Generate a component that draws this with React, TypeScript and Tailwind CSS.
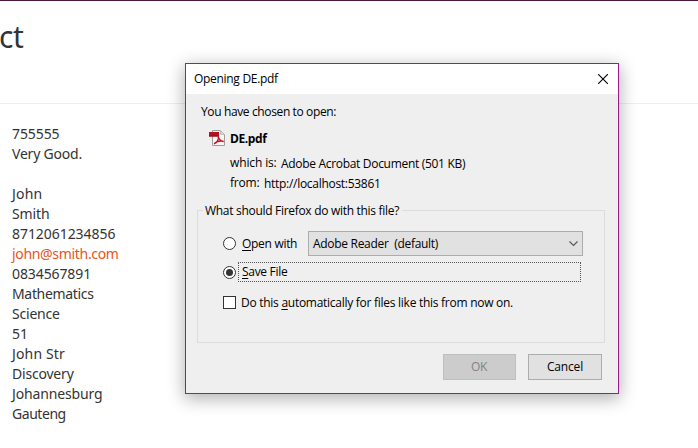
import type { ReactNode } from "react";

const details: { text: string; cls: string }[] = [
  { text: "755555", cls: "tracking-[-0.1px]" },
  { text: "Very Good.", cls: "tracking-[-0.2px]" },
  { text: "", cls: "" },
  { text: "John", cls: "tracking-[0.2px]" },
  { text: "Smith", cls: "tracking-[-0.1px]" },
  { text: "8712061234856", cls: "tracking-[-0.06px]" },
  { text: "john@smith.com", cls: "tracking-[-0.32px] text-[#e95420]" },
  { text: "0834567891", cls: "tracking-[-0.1px]" },
  { text: "Mathematics", cls: "tracking-[-0.33px]" },
  { text: "Science", cls: "tracking-[-0.2px]" },
  { text: "51", cls: "tracking-[-0.1px]" },
  { text: "John Str", cls: "tracking-[0.15px]" },
  { text: "Discovery", cls: "tracking-[-0.2px]" },
  { text: "Johannesburg", cls: "tracking-[-0.15px]" },
  { text: "Gauteng", cls: "tracking-[-0.45px]" },
];

function PdfIcon() {
  return (
    <svg width="16" height="16" viewBox="0 0 16 16" className="shrink-0">
      <path d="M3.5.5h8l4 4v11h-12z" fill="#f8f6f6" stroke="#a39c9c" />
      <path d="M11.5.5v4h4z" fill="#dcd8d8" stroke="#b9b4b4" strokeWidth="0.8" />
      <path d="M0 2h10v4.5H0z" fill="#b5121f" />
      <path d="M0 5.5h10v1H0z" fill="#8e0d18" />
      <path
        d="M9.3 6.5c.4 2.3 1.5 4.1 4.7 5M9.3 6.5c.3 2.8-1.3 5.8-3.9 7.3M5.6 13.2c1.800-1.700 4.500-2.500 8.600-2.100"
        fill="none"
        stroke="#c4121f"
        strokeWidth="1.3"
        strokeLinecap="round"
      />
    </svg>
  );
}

function Radio({ checked = false }: { checked?: boolean }) {
  return (
    <span className="flex size-[13px] shrink-0 items-center justify-center rounded-full border border-[#333] bg-white">
      {checked && <span className="size-[7px] rounded-full bg-[#333]" />}
    </span>
  );
}

function Key({ children }: { children: ReactNode }) {
  return <span className="underline decoration-1 underline-offset-2">{children}</span>;
}

function OpeningDialog() {
  return (
    <div className="absolute top-[63px] left-[185px] flex h-[331px] w-[434px] flex-col border border-[#9b1b8f] bg-[#efefef] font-['Open_Sans','Noto_Sans',sans-serif] text-[12px] leading-4 tracking-[-0.3px] text-black shadow-[0_4px_16px_1px_rgba(0,0,0,0.3)]">
      <div className="flex h-[30px] shrink-0 items-center justify-between bg-white pr-[10px] pl-2">
        <span>Opening DE.pdf</span>
        <svg width="10" height="10" viewBox="0 0 10 10" stroke="#000" strokeWidth="1.1">
          <path d="M0 0l10 10M10 0L0 10" />
        </svg>
      </div>

      <div className="flex flex-col pt-[10px] pl-[14px]">
        <p className="pl-px tracking-[-0.37px]">You have chosen to open:</p>
        <div className="mt-[10px] flex h-4 items-center gap-[5px] pl-[9px]">
          <PdfIcon />
          <span className="pt-px font-bold tracking-[-0.4px]">DE.pdf</span>
        </div>
        <div className="mt-[9px] flex h-4 gap-[5px] pl-[30px] whitespace-nowrap">
          <span className="w-[46px] tracking-[-0.13px]">which is:</span>
          <span className="pt-px tracking-[-0.31px]">Adobe Acrobat Document (501 KB)</span>
        </div>
        <div className="mt-[4px] flex h-4 gap-[5px] pl-[30px] whitespace-nowrap">
          <span className="w-[29px] tracking-[-0.2px]">from:</span>
          <span className="pt-px tracking-[-0.29px]">http://localhost:53861</span>
        </div>
      </div>

      <div className="mt-[19px] ml-[11px] h-[133px] w-[408px] shrink-0 border border-[#dcdcdc]">
        <p className="-mt-[8px] ml-[5px] w-[199px] bg-[#efefef] pl-[2px] whitespace-nowrap">
          What should Firefox do with this file?
        </p>
        <div className="mt-[12px] flex h-[25px] items-center pl-[25px]">
          <Radio />
          <span className="ml-[6px] w-[66px] pt-px">
            <Key>O</Key>pen with
          </span>
          <div className="flex h-[25px] w-[275px] items-center justify-between border border-[#acacac] bg-[#e1e1e1] pr-1 pl-1">
            <span className="pt-px whitespace-pre">Adobe Reader  (default)</span>
            <svg width="9" height="6" viewBox="0 0 9 6" fill="none" stroke="#555" strokeWidth="1.1">
              <path d="M.5.5l4 4 4-4" />
            </svg>
          </div>
        </div>
        <div className="mt-[6px] flex h-5 items-center pl-[25px]">
          <Radio checked />
          <span className="ml-[2px] flex h-5 w-[343px] items-center border border-dotted border-[#555] pl-[3px]">
            <span>
              <Key>S</Key>ave File
            </span>
          </span>
        </div>
        <div className="mt-[12px] flex h-4 items-center pl-[25px]">
          <span className="mt-px size-[13px] border border-[#333] bg-white" />
          <span className="ml-[5px] pt-[2px] tracking-[-0.27px] whitespace-nowrap">
            Do this <Key>a</Key>utomatically for files like this from now on.
          </span>
        </div>
      </div>

      <div className="mt-[11px] flex justify-end gap-3 pr-4">
        <button className="h-[26px] w-[73px] border border-[#bfbfbf] bg-[#ccc] pr-px text-[#838383]">OK</button>
        <button className="h-[26px] w-[74px] border border-[#adadad] bg-[#e1e1e1] tracking-[-0.15px]">Cancel</button>
      </div>
    </div>
  );
}

export default function App() {
  return (
    <div className="relative h-[448px] w-[698px] overflow-hidden bg-white font-['Noto_Sans',sans-serif] text-[#333]">
      <header className="h-[104px] border-t border-b border-t-[#4b1a3b] border-b-[#eee]">
        <h1 className="-ml-px pt-[19px] text-[30px] leading-[33px] tracking-[-0.3px]">ct</h1>
      </header>
      <div className="pt-5 pl-3 text-[14px] leading-5">
        {details.map((d, i) => (
          <div key={i} className={`h-5 ${d.cls}`}>
            {d.text}
          </div>
        ))}
      </div>
      <OpeningDialog />
    </div>
  );
}
